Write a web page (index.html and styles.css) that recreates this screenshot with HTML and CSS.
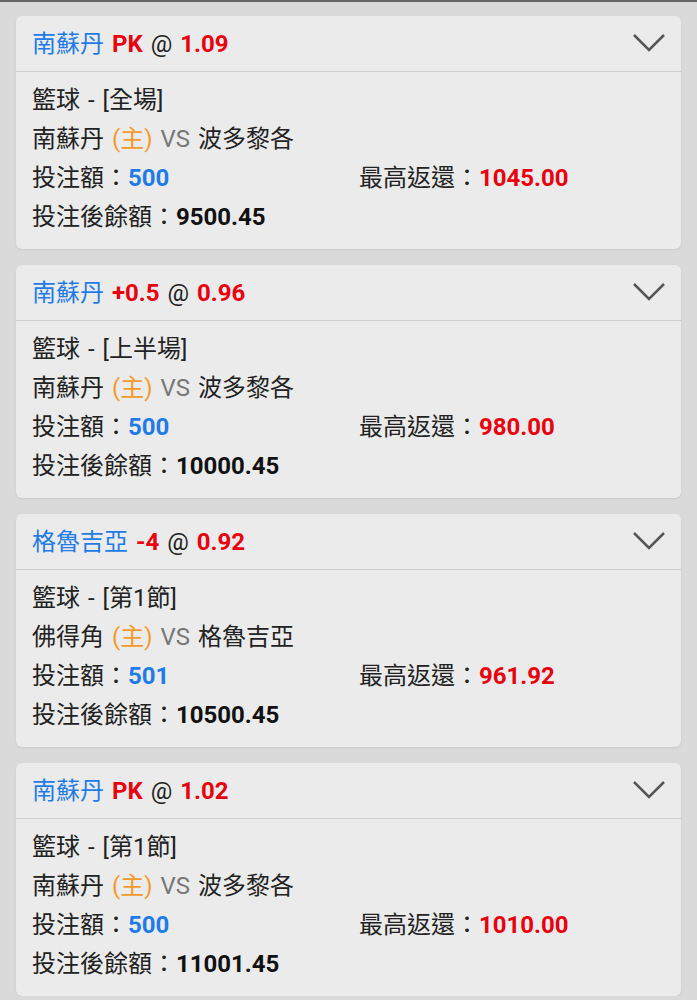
FILE: index.html
```html
<!DOCTYPE html>
<html lang="zh-Hant">
<head>
    <meta charset="UTF-8">
    <meta name="viewport" content="width=device-width, initial-scale=1.0">
    <title>注單</title>
    <link rel="stylesheet" href="styles.css">
</head>
<body>
    <div class="top-bar"></div>
    <div class="bet-list">

        <div class="bet-card">
            <div class="bet-header">
                <div class="bet-title">
                    <span class="team">南蘇丹</span>
                    <span class="hcp">PK</span>
                    <span class="at">@</span>
                    <span class="odds">1.09</span>
                </div>
                <svg class="chevron" viewBox="0 0 34 20"><polyline points="2,2 17,17 32,2"/></svg>
            </div>
            <div class="bet-body">
                <div class="row">籃球 - [全場]</div>
                <div class="row">南蘇丹 <span class="home">(主)</span> <span class="vs">VS</span> 波多黎各</div>
                <div class="row split">
                    <div>投注額：<span class="stake">500</span></div>
                    <div>最高返還：<span class="payout">1045.00</span></div>
                </div>
                <div class="row">投注後餘額：<span class="balance">9500.45</span></div>
            </div>
        </div>

        <div class="bet-card">
            <div class="bet-header">
                <div class="bet-title">
                    <span class="team">南蘇丹</span>
                    <span class="hcp">+0.5</span>
                    <span class="at">@</span>
                    <span class="odds">0.96</span>
                </div>
                <svg class="chevron" viewBox="0 0 34 20"><polyline points="2,2 17,17 32,2"/></svg>
            </div>
            <div class="bet-body">
                <div class="row">籃球 - [上半場]</div>
                <div class="row">南蘇丹 <span class="home">(主)</span> <span class="vs">VS</span> 波多黎各</div>
                <div class="row split">
                    <div>投注額：<span class="stake">500</span></div>
                    <div>最高返還：<span class="payout">980.00</span></div>
                </div>
                <div class="row">投注後餘額：<span class="balance">10000.45</span></div>
            </div>
        </div>

        <div class="bet-card">
            <div class="bet-header">
                <div class="bet-title">
                    <span class="team">格魯吉亞</span>
                    <span class="hcp">-4</span>
                    <span class="at">@</span>
                    <span class="odds">0.92</span>
                </div>
                <svg class="chevron" viewBox="0 0 34 20"><polyline points="2,2 17,17 32,2"/></svg>
            </div>
            <div class="bet-body">
                <div class="row">籃球 - [第1節]</div>
                <div class="row">佛得角 <span class="home">(主)</span> <span class="vs">VS</span> 格魯吉亞</div>
                <div class="row split">
                    <div>投注額：<span class="stake">501</span></div>
                    <div>最高返還：<span class="payout">961.92</span></div>
                </div>
                <div class="row">投注後餘額：<span class="balance">10500.45</span></div>
            </div>
        </div>

        <div class="bet-card">
            <div class="bet-header">
                <div class="bet-title">
                    <span class="team">南蘇丹</span>
                    <span class="hcp">PK</span>
                    <span class="at">@</span>
                    <span class="odds">1.02</span>
                </div>
                <svg class="chevron" viewBox="0 0 34 20"><polyline points="2,2 17,17 32,2"/></svg>
            </div>
            <div class="bet-body">
                <div class="row">籃球 - [第1節]</div>
                <div class="row">南蘇丹 <span class="home">(主)</span> <span class="vs">VS</span> 波多黎各</div>
                <div class="row split">
                    <div>投注額：<span class="stake">500</span></div>
                    <div>最高返還：<span class="payout">1010.00</span></div>
                </div>
                <div class="row">投注後餘額：<span class="balance">11001.45</span></div>
            </div>
        </div>

    </div>
</body>
</html>
```

FILE: styles.css
```css
body {
    margin: 0;
    font-family: Roboto, "Noto Sans CJK TC", sans-serif;
    font-size: 24px;
    word-spacing: 2px;
    color: #222;
    background-color: #dadada;
}

.top-bar {
    height: 2px;
    background-color: #666;
}

.bet-list {
    display: flex;
    flex-direction: column;
    gap: 16px;
    padding: 14px 16px 0;
}

.bet-card {
    background-color: #ebebeb;
    border-radius: 6px;
    box-shadow: 0 1px 2px rgba(0, 0, 0, 0.08);
}

.bet-header {
    height: 55px;
    display: flex;
    align-items: center;
    justify-content: space-between;
    padding: 0 15px 0 16px;
    border-bottom: 1px solid #cfcfcf;
}

.bet-title {
    padding-bottom: 5px;
}

.team {
    color: #1f7be8;
}

.hcp, .odds {
    color: #e8000f;
    font-weight: bold;
}

.at {
    color: #222;
}

.chevron {
    width: 34px;
    height: 20px;
    margin-bottom: 2px;
    fill: none;
    stroke: #555;
    stroke-width: 2.5;
}

.bet-body {
    padding: 9px 16px 12px;
}

.row {
    height: 39px;
    line-height: 39px;
    white-space: nowrap;
}

.split {
    display: grid;
    grid-template-columns: 327px 1fr;
}

.home {
    color: #f39a2c;
}

.vs {
    color: #777;
}

.stake {
    color: #1f7be8;
    font-weight: bold;
}

.payout {
    color: #e8000f;
    font-weight: bold;
}

.balance {
    font-weight: bold;
    color: #111;
}
```
